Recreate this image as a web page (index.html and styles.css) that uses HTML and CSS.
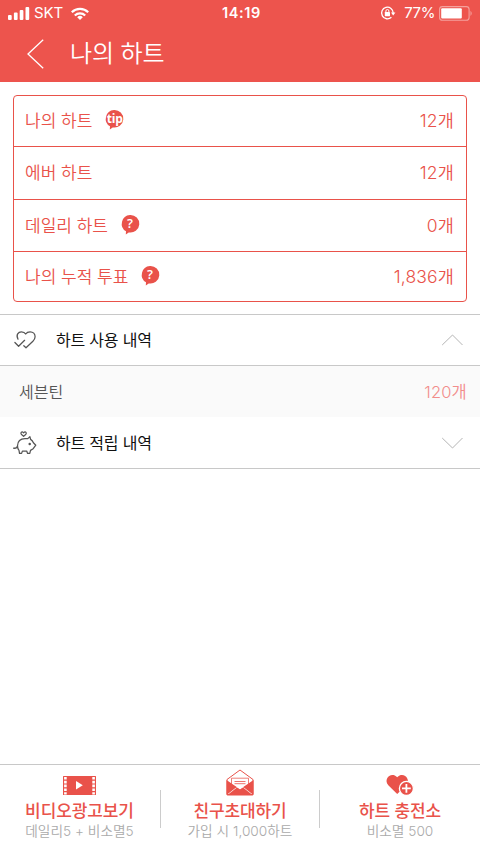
FILE: index.html
```html
<!DOCTYPE html>
<html lang="ko">
<head>
<meta charset="utf-8">
<title>나의 하트</title>
<link rel="stylesheet" href="styles.css">
</head>
<body>
<div class="screen">
  <header class="top">
    <div class="status">
      <div class="status-left">
        <svg width="22" height="13" viewBox="0 0 22 13" fill="#fff"><rect x="0" y="8" width="3.7" height="5" rx="1"/><rect x="5.9" y="5.5" width="3.7" height="7.5" rx="1"/><rect x="11.7" y="3" width="3.7" height="10" rx="1"/><rect x="17.5" y="0" width="3.7" height="13" rx="1"/></svg>
        <span class="carrier">SKT</span>
        <svg class="wifi" width="18" height="13" viewBox="0 0 18 13" fill="none" stroke="#fff" stroke-width="2.2"><path d="M.8 5.2a11.7 11.7 0 0 1 16.4 0M3.8 8.5a7.4 7.4 0 0 1 10.4 0"/><path d="M9 13 6.2 10.2a4 4 0 0 1 5.6 0z" fill="#fff" stroke="none"/></svg>
      </div>
      <span class="clock">14:19</span>
      <div class="status-right">
        <svg width="14" height="14" viewBox="0 0 14 14" fill="none" stroke="#fff" stroke-width="1.3"><path d="M12.2 7A5.8 5.8 0 1 0 10.4 11.2"/><path d="M10 6.5h4.4L12.2 9.5z" fill="#fff" stroke="none"/><rect x="3.8" y="6" width="5.2" height="4.2" rx=".4" fill="#fff" stroke="none"/><path d="M4.9 6.3V5a1.5 1.5 0 0 1 3 0v1.3" stroke-width="1"/></svg>
        <span class="percent">77%</span>
        <svg width="34" height="15" viewBox="0 0 34 15"><rect x=".6" y=".6" width="29.5" height="13.6" rx="2.8" fill="none" stroke="#fff" stroke-opacity=".45" stroke-width="1.1"/><rect x="2.2" y="2.2" width="20.6" height="10.4" rx="1" fill="#fff"/><path d="M31.5 4.8q2.4 2.6 0 5.2z" fill="#fff" fill-opacity=".45"/></svg>
      </div>
    </div>
    <div class="titlebar">
      <svg width="17" height="30" viewBox="0 0 17 30" fill="none" stroke="#fff" stroke-width="1.3"><path d="M16.2.8 1 15l15.2 14.2"/></svg>
      <h1>나의 하트</h1>
    </div>
  </header>

  <section class="card">
    <div class="row"><span class="label">나의 하트</span><svg class="bubble" width="18" height="20" viewBox="0 0 18 20"><path d="M9 0a8.8 8.8 0 1 1-1.3 17.4L4.8 19.5l.2-3.2A8.8 8.8 0 0 1 9 0z" fill="#e9524a"/><text x="9.6" y="12.6" class="tip">tip</text></svg><span class="value">12개</span></div>
    <div class="row"><span class="label">에버 하트</span><span class="value">12개</span></div>
    <div class="row"><span class="label">데일리 하트</span><svg class="bubble" width="18" height="20" viewBox="0 0 18 20"><path d="M9 0a8.8 8.8 0 1 1-1.3 17.4L4.8 19.5l.2-3.2A8.8 8.8 0 0 1 9 0z" fill="#e9524a"/><text x="9" y="13.3" class="question">?</text></svg><span class="value">0개</span></div>
    <div class="row"><span class="label">나의 누적 투표</span><svg class="bubble" width="18" height="20" viewBox="0 0 18 20"><path d="M9 0a8.8 8.8 0 1 1-1.3 17.4L4.8 19.5l.2-3.2A8.8 8.8 0 0 1 9 0z" fill="#e9524a"/><text x="9" y="13.3" class="question">?</text></svg><span class="value">1,836개</span></div>
  </section>

  <section class="history">
    <div class="fold">
      <svg class="fold-icon" width="24" height="24" viewBox="0 0 24 24" fill="none" stroke="#555" stroke-width="1.25" stroke-linejoin="round" stroke-linecap="round"><path d="M4 11.2C1.6 6.8 4.4 3.8 7.4 3.8c2 0 3.5.8 4.3 2.2.9-1.4 2.4-2.2 4.4-2.2 3 0 5 2.3 5 5 0 2-1 3.3-2.2 4.5L12 19.8l-2.2-2.1M.9 14.5l3.7 3.8 6-6"/></svg>
      <span class="fold-name">하트 사용 내역</span>
      <svg class="chevron" width="22" height="12" viewBox="0 0 22 12" fill="none" stroke="#b5b5b5"><path d="M1.2 11 11.5 1l10 10"/></svg>
    </div>
    <div class="entry"><span>세븐틴</span><span class="entry-value">120개</span></div>
    <div class="fold">
      <svg class="fold-icon" width="24" height="24" viewBox="0 0 24 24" fill="none" stroke="#555" stroke-width="1.25" stroke-linejoin="round" stroke-linecap="round"><path d="M9.6 5.4 7.3 3.2c-1-1.3.3-2.7 1.5-2.1l.8.7.8-.7c1.2-.6 2.5.8 1.5 2.1zM-.4 17.2c2.6.3 3.6-.6 3.9-2.4.2-5 3.6-7.2 7.5-7.2h2.8l2.1-2 .7 2.8c1.7 1 2.3 2.2 2.8 3.4l2.4 2.4-2.6 3.5-2.7 1.7-.7 3h-2.2l-.9-2.3H8.4l-.8 2.3H5.5L5 19.4c-1-1-1.5-2.3-1.5-4.6"/><circle cx="15.7" cy="12.9" r=".6" fill="#555"/></svg>
      <span class="fold-name">하트 적립 내역</span>
      <svg class="chevron" width="22" height="12" viewBox="0 0 22 12" fill="none" stroke="#b5b5b5"><path d="m1.2 1 10.3 10 10-10"/></svg>
    </div>
  </section>

  <nav class="bottom">
    <div class="action">
      <svg width="33" height="28" viewBox="0 0 33 28"><rect x="0" y="7" width="33" height="19" rx=".6" fill="#e9524a"/><path d="M13 12v8.6l6.8-4.3z" fill="#fff"/><path d="M2.4 8v17.5M30.6 8v17.5" stroke="#fff" stroke-width="2.6" stroke-dasharray="2.6 1.2"/></svg>
      <strong>비디오광고보기</strong><small>데일리5 + 비소멸5</small>
    </div>
    <div class="action">
      <svg width="28" height="28" viewBox="0 0 28 28"><path d="M1 10.5 14 1l13 9.5v15H1z" fill="#fff" stroke="#e9524a"/><path d="M5.5 16V9.2h17V16L14 21z" fill="#fff" stroke="#e9524a" stroke-opacity=".75"/><path d="M8.5 12.5h11M8.5 14.7h11" stroke="#e9524a" stroke-width=".8"/><path d="M.5 11 10.7 18 .5 26zM27.5 11 17.3 18l10.2 8zM.8 26.4 11 18.6l3 1.8 3-1.8 10.2 7.8z" fill="#e9524a"/></svg>
      <strong>친구초대하기</strong><small>가입 시 1,000하트</small>
    </div>
    <div class="action">
      <svg width="28" height="28" viewBox="0 0 28 28"><path d="M11.2 25 2.3 16.2C-3 10.5 4.8 2 11.2 8.2 17.6 2 25.4 10.5 20.2 16.2z" fill="#e9524a"/><circle cx="20.4" cy="19.4" r="7" fill="#e9524a" stroke="#fff" stroke-width="1.3"/><path d="M20.4 15v8.8M16 19.4h8.8" stroke="#fff" stroke-width="1.8"/></svg>
      <strong>하트 충전소</strong><small>비소멸 500</small>
    </div>
  </nav>
</div>
</body>
</html>
```
FILE: styles.css
```css
* { box-sizing: border-box; }
body { margin: 0; background: #fff; font-family: Inter, "Noto Sans CJK KR", sans-serif; }
svg { display: block; flex: none; overflow: visible; }
.screen { width: 480px; height: 854px; display: flex; flex-direction: column; overflow: hidden; }
.top { height: 82px; background: #ed544d; color: #fff; flex: none; }
.status { height: 26px; display: grid; grid-template-columns: 1fr auto 1fr; align-items: center; padding: 0 7px 0 8px; font-size: 15px; line-height: 26px; }
.status-left, .status-right { display: flex; align-items: center; }
.status-right { justify-content: flex-end; }
.carrier { margin-left: 4px; letter-spacing: -.1px; }
.wifi { margin-left: 8px; }
.clock { padding-left: 2px; font-weight: 600; letter-spacing: .6px; font-size: 14.5px; }
.percent { margin: 0 4px 0 9px; letter-spacing: -.4px; }
.titlebar { height: 56px; display: flex; align-items: center; padding-left: 27px; }
.titlebar h1 { margin: 0 0 0 26px; font-size: 24px; line-height: 56px; font-weight: 350; letter-spacing: -.1px; }
.card { flex: none; margin: 13px 13px 0; height: 207px; border: 1.5px solid #e9524a; border-radius: 4px; display: grid; grid-template-rows: 51px 53px 52px 1fr; color: #e9524a; }
.row { display: flex; align-items: center; padding: 0 12px 2px 11px; font-size: 17px; line-height: 24px; font-weight: 350; border-bottom: 1px solid #e9524a; }
.row:last-child { border-bottom: 0; padding-bottom: 1px; }
.label, .value { padding-top: 2px; }
.bubble { margin-left: 13px; }
.value { margin-left: auto; font-size: 17.5px; letter-spacing: .15px; }
.tip { font: 700 12px "Open Sans", sans-serif; letter-spacing: -.2px; fill: #fff; text-anchor: middle; }
.question { font: 600 13px "Open Sans", sans-serif; fill: #fff; text-anchor: middle; }
.history { margin-top: 12px; border-top: 1px solid #c8c8c8; }
.fold { height: 51px; display: flex; align-items: center; padding: 0 17px 0 14px; border-bottom: 1px solid #c8c8c8; }
.fold:last-child { height: 52px; }
.fold-name { margin-left: 18px; padding-bottom: 2px; font-size: 16px; letter-spacing: -.2px; color: #111; }
.chevron { margin-left: auto; }
.entry { height: 51px; display: flex; align-items: center; justify-content: space-between; padding: 0 13px 2px 19px; background: #fafafa; color: #555; font-size: 16px; font-weight: 350; }
.entry-value { color: #f28d8b; font-size: 16.5px; letter-spacing: .2px; }
.bottom { margin-top: auto; height: 90px; flex: none; border-top: 1px solid #c8c8c8; display: grid; grid-template-columns: repeat(3, 1fr); background: #fff; }
.action { position: relative; display: flex; flex-direction: column; align-items: center; padding-top: 4px; }
.action:first-child { padding-right: 1px; }
.action + .action::before { content: ""; position: absolute; left: 0; top: 25px; width: 1px; height: 38px; background: #ccc; }
.action:last-child::before { left: -1px; }
.action strong { margin-top: 2px; font-size: 17px; line-height: 24px; font-weight: 500; letter-spacing: -.1px; color: #e9524a; }
.action small { font-size: 13.7px; line-height: 16px; font-weight: 350; color: #aaa; }
```
